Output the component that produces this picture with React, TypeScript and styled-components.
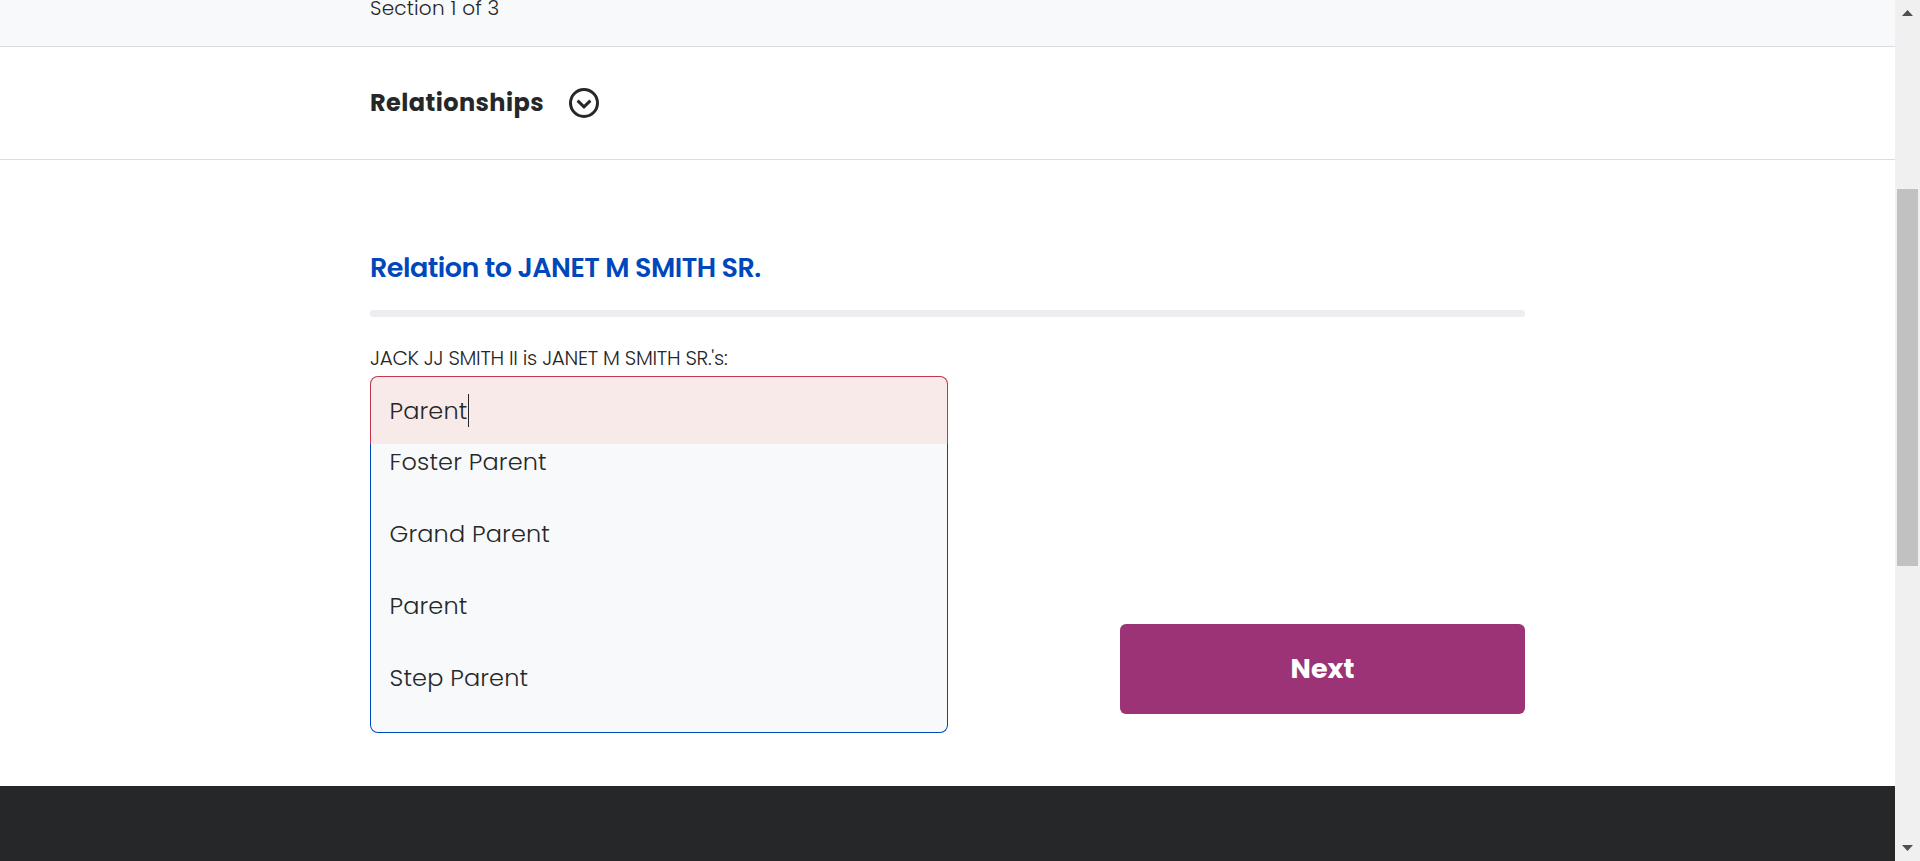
import React from "react";
import styled, { createGlobalStyle } from "styled-components";

const GlobalStyle = createGlobalStyle`
  * { box-sizing: border-box; }
  html, body { margin: 0; padding: 0; }
  body {
    background: #fff;
    color: #252729;
    font-family: Poppins, Inter, "Liberation Sans", sans-serif;
    font-weight: 300;
    overflow: hidden;
  }
`;

const Window = styled.div`
  display: flex;
  width: 1920px;
  height: 861px;
  overflow: hidden;
`;

const Page = styled.div`
  display: flex;
  flex-direction: column;
  flex: 1;
  min-width: 0;
`;

const Container = styled.div`
  width: 1155px;
  margin: 0 auto;
`;

const ProgressBar = styled.header`
  height: 47px;
  background: #f8f9fb;
  border-bottom: 1px solid #dcdde3;
`;

const ProgressLabel = styled.div`
  font-size: 20px;
  line-height: 16px;
  letter-spacing: 0.2px;
`;

const SectionBar = styled.section`
  display: flex;
  align-items: center;
  height: 113px;
  border-bottom: 1px solid #dcdde3;
`;

const SectionToggle = styled(Container)`
  display: flex;
  align-items: center;
  gap: 25px;
`;

const SectionTitle = styled.span`
  font-size: 24px;
  font-weight: 700;
  line-height: 30px;
  letter-spacing: 0.43px;
`;

const Main = styled.main`
  height: 626px;
  padding-top: 88px;
`;

const Heading = styled.h2`
  margin: 0;
  color: #0047bb;
  font-weight: 600;
  font-size: 27px;
  line-height: 40px;
  letter-spacing: -0.5px;
`;

const Divider = styled.div`
  height: 7px;
  margin-top: 22px;
  border-radius: 4px;
  background: #ecedf1;
`;

const FieldLabel = styled.div`
  margin: 27px 0 4px;
  font-size: 20px;
  line-height: 28px;
  letter-spacing: -0.29px;
`;

const FormRow = styled.div`
  display: flex;
  justify-content: space-between;
  align-items: flex-end;
`;

const Combobox = styled.div`
  width: 578px;
  font-size: 24px;
  letter-spacing: 0.15px;
`;

const Field = styled.div`
  display: flex;
  align-items: center;
  height: 68px;
  padding: 0 18.5px;
  border: 1px solid #c0384f;
  border-bottom: 0;
  border-radius: 8px 8px 0 0;
  background: #f9eaea;
  line-height: 34px;
`;

const Caret = styled.span`
  width: 1px;
  height: 33px;
  background: #252729;
`;

const Menu = styled.div`
  height: 289px;
  overflow: hidden;
  border: 1px solid #0047bb;
  border-top: 0;
  border-radius: 0 0 8px 8px;
  background: #f8f9fb;
`;

const Options = styled.div`
  margin-top: -18px;
`;

const Option = styled.div`
  height: 72px;
  padding: 0 18.5px;
  line-height: 72px;
`;

const NextButton = styled.button`
  width: 405px;
  height: 90px;
  margin: 0 0 19px;
  padding: 0;
  border: 0;
  border-radius: 6px;
  background: #9b3376;
  color: #fff;
  font-family: inherit;
  font-size: 27px;
  font-weight: 700;
`;

const Footer = styled.footer`
  flex: 1;
  background: #252729;
`;

const Scrollbar = styled.div`
  display: flex;
  flex-direction: column;
  align-items: center;
  width: 25px;
  padding: 10px 0;
  background: #f0f0f0;
`;

const Thumb = styled.div`
  width: 21px;
  height: 377px;
  margin: 173px 0 279px;
  background: #c1c1c1;
`;

const Arrow = ({ d }: { d: string }) => (
  <svg width="11" height="6" viewBox="0 0 11 6">
    <path d={d} fill="#505050" />
  </svg>
);

const options = ["Foster Parent", "Grand Parent", "Parent", "Step Parent"];

export default function App() {
  return (
    <>
      <GlobalStyle />
      <Window>
        <Page>
          <ProgressBar>
            <Container>
              <ProgressLabel>Section 1 of 3</ProgressLabel>
            </Container>
          </ProgressBar>
          <SectionBar>
            <SectionToggle>
              <SectionTitle>Relationships</SectionTitle>
              <svg width="30" height="30" viewBox="0 0 30 30" fill="none" stroke="#252729" strokeWidth="3">
                <circle cx="15" cy="15" r="13.5" />
                <path d="M8.6 12.6 15 18.8 21.4 12.6" />
              </svg>
            </SectionToggle>
          </SectionBar>
          <Main>
            <Container>
              <Heading>Relation to JANET M SMITH SR.</Heading>
              <Divider />
              <FieldLabel>JACK JJ SMITH II is JANET M SMITH SR.'s:</FieldLabel>
              <FormRow>
                <Combobox>
                  <Field>
                    <span>Parent</span>
                    <Caret />
                  </Field>
                  <Menu>
                    <Options>
                      {options.map((option) => (
                        <Option key={option}>{option}</Option>
                      ))}
                    </Options>
                  </Menu>
                </Combobox>
                <NextButton>Next</NextButton>
              </FormRow>
            </Container>
          </Main>
          <Footer />
        </Page>
        <Scrollbar>
          <Arrow d="M0 6 5.5 0 11 6Z" />
          <Thumb />
          <Arrow d="M0 0 5.5 6 11 0Z" />
        </Scrollbar>
      </Window>
    </>
  );
}
